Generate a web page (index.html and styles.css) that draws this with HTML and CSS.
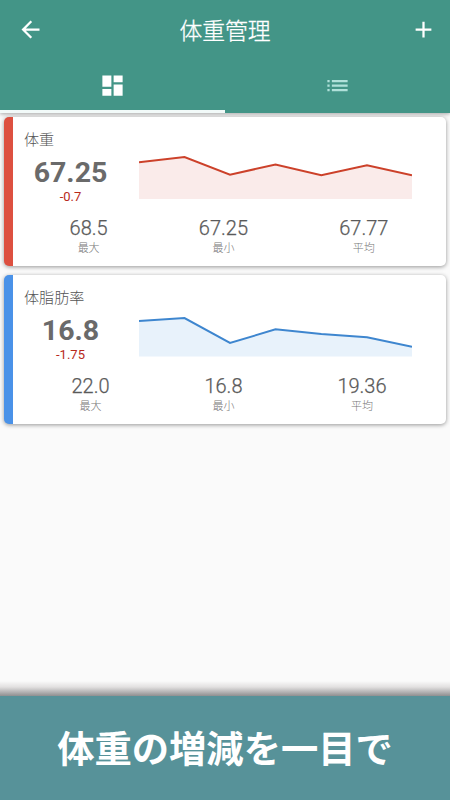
FILE: index.html
```html
<!DOCTYPE html>
<html lang="ja">
<head>
    <meta charset="UTF-8">
    <meta name="viewport" content="width=device-width, initial-scale=1.0">
    <title>体重管理</title>
    <link rel="stylesheet" href="styles.css">
</head>
<body>
    <header class="header">
        <div class="toolbar">
            <svg class="icon" viewBox="0 0 24 24"><path d="M20 11H7.83l5.59-5.59L12 4l-8 8 8 8 1.41-1.41L7.83 13H20v-2z"/></svg>
            <h1>体重管理</h1>
            <svg class="icon" viewBox="0 0 24 24"><path d="M19 13h-6v6h-2v-6H5v-2h6V5h2v6h6v2z"/></svg>
        </div>
        <nav class="tabs">
            <a class="tab active">
                <svg viewBox="0 0 24 24"><path d="M3 13h8V3H3v10zm0 8h8v-6H3v6zm10 0h8V11h-8v10zm0-18v6h8V3h-8z"/></svg>
            </a>
            <a class="tab">
                <svg viewBox="0 0 24 24"><path d="M3 13h2v-2H3v2zm0 4h2v-2H3v2zm0-8h2V7H3v2zm4 4h14v-2H7v2zm0 4h14v-2H7v2zM7 7v2h14V7H7z"/></svg>
            </a>
        </nav>
    </header>

    <main class="cards">
        <section class="card red">
            <h2>体重</h2>
            <div class="summary">
                <div class="current">
                    <div class="value">67.25</div>
                    <div class="diff">-0.7</div>
                </div>
                <svg class="chart" viewBox="0 0 273 50">
                    <polygon points="0,13.3 45.5,8 91,25.7 136.5,15.5 182.3,26.3 228,16.2 273,26.3 273,50 0,50"/>
                    <polyline points="0,13.3 45.5,8 91,25.7 136.5,15.5 182.3,26.3 228,16.2 273,26.3"/>
                </svg>
            </div>
            <div class="stats">
                <div class="stat"><b>68.5</b><span>最大</span></div>
                <div class="stat"><b>67.25</b><span>最小</span></div>
                <div class="stat"><b>67.77</b><span>平均</span></div>
            </div>
        </section>

        <section class="card blue">
            <h2>体脂肪率</h2>
            <div class="summary">
                <div class="current">
                    <div class="value">16.8</div>
                    <div class="diff">-1.75</div>
                </div>
                <svg class="chart" viewBox="0 0 273 50">
                    <polygon points="0,14 45.5,11 91,36 136.5,22.3 182.3,26.9 228,30.2 273,39.7 273,49.5 0,49.5"/>
                    <polyline points="0,14 45.5,11 91,36 136.5,22.3 182.3,26.9 228,30.2 273,39.7"/>
                </svg>
            </div>
            <div class="stats">
                <div class="stat"><b>22.0</b><span>最大</span></div>
                <div class="stat"><b>16.8</b><span>最小</span></div>
                <div class="stat"><b>19.36</b><span>平均</span></div>
            </div>
        </section>
    </main>

    <div class="fade"></div>
    <footer class="banner">体重の増減を一目で</footer>
</body>
</html>
```

FILE: styles.css
```css
* {
    box-sizing: border-box;
}

body {
    font-family: Roboto, "Noto Sans CJK JP", sans-serif;
    margin: 0;
    height: 800px;
    display: flex;
    flex-direction: column;
    overflow: hidden;
    background-color: #fafafa;
}

svg {
    display: block;
}

/* Header */
.header {
    height: 113px;
    flex: none;
    background-color: #439587;
    box-shadow: 0 1px 4px rgba(0, 0, 0, 0.35);
}

.toolbar {
    height: 59px;
    padding: 0 13px 0 17px;
    display: flex;
    justify-content: space-between;
    align-items: center;
}

.toolbar h1 {
    margin: 0 4px 0 0;
    padding-top: 4px;
    color: white;
    font-size: 22.8px;
    font-weight: 300;
    line-height: 30px;
    -webkit-text-stroke: 0.3px white;
}

.icon {
    width: 27px;
    height: 27px;
    fill: white;
}

.tabs {
    display: flex;
    height: 54px;
}

.tab {
    flex: 1;
    display: flex;
    justify-content: center;
    align-items: center;
    border-bottom: 3px solid transparent;
    padding-top: 2px;
}

.tab svg {
    width: 27px;
    height: 27px;
    fill: #b0e1da;
}

.tab.active {
    border-bottom-color: #f2faf9;
}

.tab.active svg {
    fill: white;
}

/* Cards */
.cards {
    flex: 1;
    padding: 4px 4px 0 4px;
}

.card {
    height: 149px;
    margin-bottom: 8.5px;
    padding: 12px 12px 0 11px;
    border-left: 9px solid;
    border-radius: 5px;
    background-color: white;
    box-shadow: 0 1px 4px rgba(0, 0, 0, 0.4);
}

.card h2 {
    margin: 0;
    color: #555;
    font-size: 15.1px;
    font-weight: 300;
    line-height: 23px;
}

.summary {
    display: flex;
    height: 47px;
}

.current {
    width: 93px;
    margin-right: 22px;
    text-align: center;
}

.value {
    padding-top: 4px;
    color: #6a6a6a;
    font-size: 28.5px;
    font-weight: bold;
    line-height: 34px;
}

.diff {
    color: #b8291a;
    font-size: 13px;
    line-height: 13px;
}

.chart {
    width: 273px;
    height: 50px;
    margin-top: -3px;
}

.chart polyline {
    fill: none;
    stroke-width: 2;
}

.stats {
    display: flex;
    justify-content: space-around;
    padding-top: 17px;
}

.stat {
    text-align: center;
}

.stat b {
    display: block;
    color: #5a5a5a;
    font-size: 20px;
    font-weight: 300;
    line-height: 24px;
    -webkit-text-stroke: 0.25px #5a5a5a;
}

.stat span {
    display: block;
    color: #777;
    font-size: 11px;
    font-weight: 300;
    line-height: 17px;
}

.red {
    border-left-color: #dd5040;
}

.red polygon {
    fill: #faebea;
}

.red polyline {
    stroke: #cc412a;
}

.blue {
    border-left-color: #4a92e8;
}

.blue polygon {
    fill: #e8f2fb;
}

.blue polyline {
    stroke: #3e86cf;
}

/* Bottom banner */
.fade {
    height: 15px;
    flex: none;
    background: linear-gradient(#fafafa, #e2e0e0 40%, #8f8f90);
}

.banner {
    height: 104px;
    flex: none;
    background-color: #579299;
    color: white;
    font-size: 37.3px;
    font-weight: bold;
    line-height: 108px;
    text-align: center;
}
```
